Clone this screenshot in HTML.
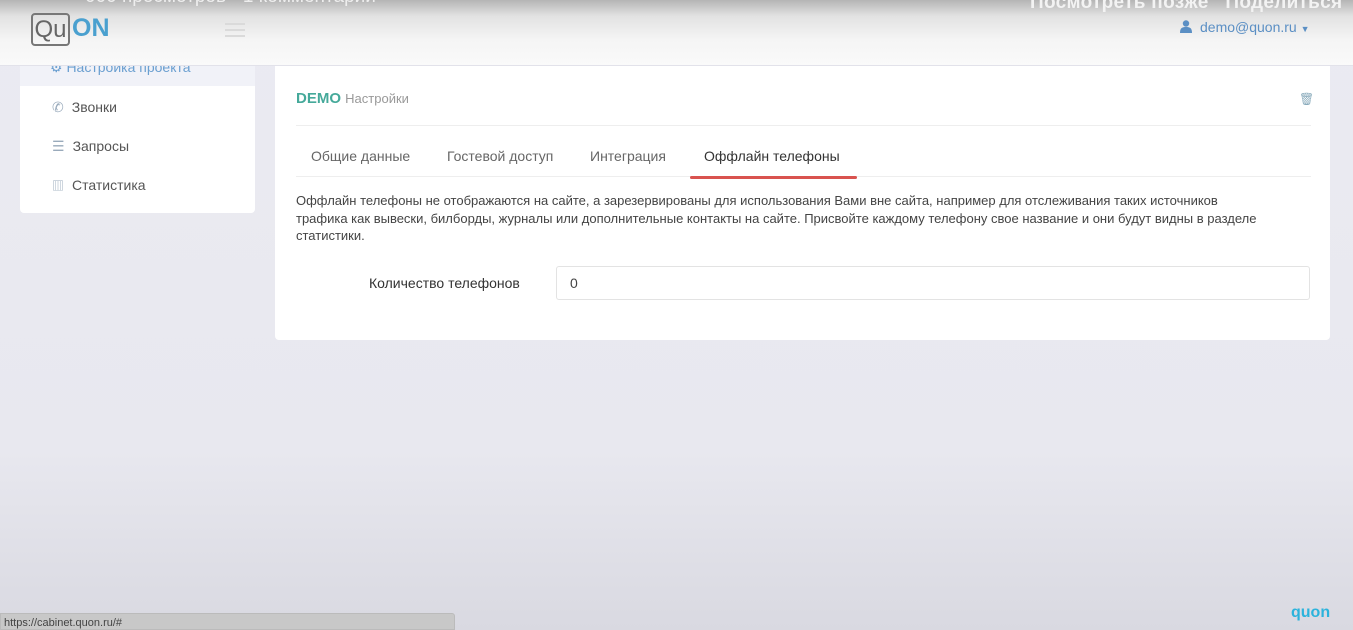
<!DOCTYPE html>
<html><head><meta charset="utf-8"><style>
*{box-sizing:border-box;margin:0;padding:0}
body{width:1353px;height:630px;overflow:hidden;position:relative;font-family:"Liberation Sans","Noto Sans CJK SC",sans-serif;background:linear-gradient(#ebebf2 0,#e8e8ef 450px,#d9d9e1 630px);color:#555}
.hdr{position:absolute;left:0;top:0;width:1353px;height:66px;background:linear-gradient(#b5b5b5 0,#e2e2e2 16px,#f5f5f5 40px,#fafafa 66px);border-bottom:1px solid #e2e2ea;z-index:2}
.logo{position:absolute;left:31px;top:13px;width:39px;height:33px;border:2px solid #777;border-radius:4px;font-size:24px;color:#666;line-height:29px;text-align:center}
.on{position:absolute;left:72px;top:14px;font-size:25px;font-weight:bold;color:#4aa0cf}
.burg{position:absolute;left:225px;top:23px;width:20px}
.burg i{display:block;height:2px;background:#dadada;margin-bottom:4px}
.yt{position:absolute;left:85px;top:-14px;font-size:19px;color:#eee}
.yt2{position:absolute;left:1030px;top:-8px;font-size:19px;font-weight:bold;color:#f3f3f3;letter-spacing:.3px}
.user{position:absolute;left:1180px;top:19px;font-size:14px;color:#5b8fc4}
.side{position:absolute;left:20px;top:66px;width:235px;height:147px;background:#fff;border-radius:0 0 4px 4px}
.side .act{height:20px;background:#f1f2f8}
.side .it{position:absolute;left:32px;font-size:14px;color:#555}
.card{position:absolute;left:275px;top:66px;width:1055px;height:274px;background:#fff;border-radius:0 0 4px 4px}
.demo{position:absolute;left:21px;top:24px;font-size:15px;font-weight:bold;color:#45a99a}
.demo span{font-size:13px;font-weight:normal;color:#999}
.hr{position:absolute;left:21px;width:1015px;height:1px;background:#eee}
.tab{position:absolute;top:82px;font-size:14px;color:#666}
.ul{position:absolute;left:415px;top:110px;width:167px;height:3px;background:#d9534f;border-radius:2px}
.txt{position:absolute;left:21px;top:126px;width:1000px;font-size:13px;line-height:17.5px;color:#444}
.lbl{position:absolute;left:94px;top:209px;font-size:14px;color:#333}
.inp{position:absolute;left:281px;top:200px;width:754px;height:34px;border:1px solid #e3e3e3;border-radius:3px;padding:8px 13px;font-size:14px;color:#444}
.status{position:absolute;left:0;top:613px;width:455px;height:17px;background:#c8c8c8;border:1px solid #bbb;border-radius:0 3px 0 0;font-size:11px;color:#444;padding:3px 3px}
.quon{position:absolute;left:1291px;top:604px;font-size:16px;font-weight:bold;color:#2cb3dc}
</style></head><body>
<div class="hdr">
<div class="yt">000 просмотров · 1 комментарий</div>
<div class="yt2">Посмотреть позже &nbsp; Поделиться</div>
<div class="logo">Qu</div><div class="on">ON</div>
<div class="burg"><i></i><i></i><i></i></div>
<div class="user"><svg width="12" height="13" viewBox="0 0 12 13" style="vertical-align:-1px;margin-right:8px"><circle cx="6" cy="3.5" r="3.2" fill="#5b8fc4"/><path d="M0 13 C0 8 2 7 6 7 C10 7 12 8 12 13Z" fill="#5b8fc4"/></svg>demo@quon.ru <span style="font-size:9px;color:#5b8fc4">▼</span></div>
</div>
<div class="side">
<div class="act"></div>
<div class="it" style="top:33px"><span style="color:#9ab;margin-right:8px">✆</span>Звонки</div>
<div class="it" style="top:72px"><span style="color:#9ab;margin-right:8px">☰</span>Запросы</div>
<div class="it" style="top:111px"><span style="color:#9ab;margin-right:8px;font-size:12px">▥</span>Статистика</div>
</div>
<div style="position:absolute;left:50px;top:59px;font-size:14px;color:#6a9fd0;z-index:1">⚙ Настройка проекта</div>
<div class="card">
<div class="demo">DEMO <span>Настройки</span></div>
<div style="position:absolute;left:1024px;top:26px;color:#8ab;font-size:12px">🗑</div>
<div class="hr" style="top:59px"></div>
<div class="tab" style="left:36px">Общие данные</div>
<div class="tab" style="left:172px">Гостевой доступ</div>
<div class="tab" style="left:315px">Интеграция</div>
<div class="tab" style="left:429px;color:#333">Оффлайн телефоны</div>
<div class="hr" style="top:110px"></div>
<div class="ul"></div>
<div class="txt">Оффлайн телефоны не отображаются на сайте, а зарезервированы для использования Вами вне сайта, например для отслеживания таких источников<br>трафика как вывески, билборды, журналы или дополнительные контакты на сайте. Присвойте каждому телефону свое название и они будут видны в разделе<br>статистики.</div>
<div class="lbl">Количество телефонов</div>
<div class="inp">0</div>
</div>
<div class="status">https://cabinet.quon.ru/#</div>
<div class="quon">quon</div>
</body></html>
